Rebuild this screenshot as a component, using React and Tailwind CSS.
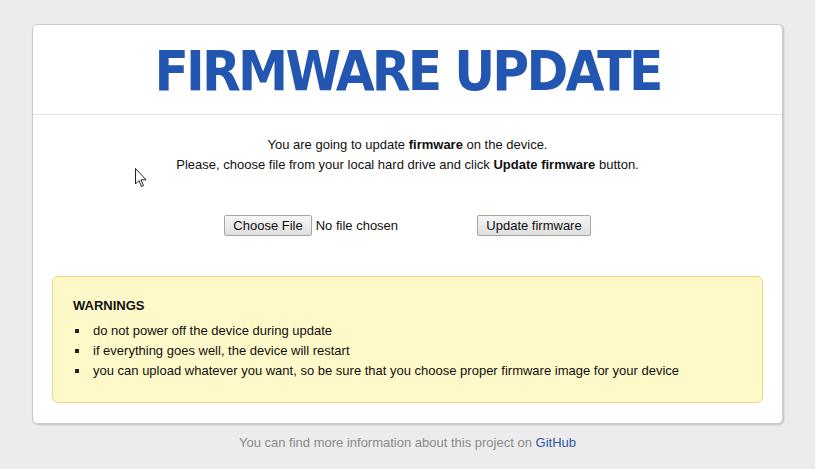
import React from "react";

function Btn({ children, className = "" }) {
  return (
    <span
      className={
        "inline-flex items-center h-[21px] px-[8px] border border-[#a6a6a6] rounded-[2px] bg-gradient-to-b from-[#f6f6f6] to-[#dedede] text-[13px] text-[#111] leading-none " +
        className
      }
    >
      {children}
    </span>
  );
}

export default function App() {
  return (
    <div className="min-h-[469px] w-full bg-[#ececec] relative font-['Liberation_Sans',Arial,sans-serif] text-[13px] text-[#111]">
      <div className="pt-[24px] px-[32px]">
        <div className="w-[751px] h-[400px] bg-white border border-[#c9c9c9] rounded-[5px] shadow-[1px_1px_2px_rgba(0,0,0,0.18)] flex flex-col">
          <div className="h-[90px] border-b border-[#e3e3e3] flex items-center justify-center">
            <h1 className="font-['DejaVu_Sans_Condensed','DejaVu_Sans',Verdana,sans-serif] font-bold text-[56px] leading-none text-[#2256b0] tracking-[-2.8px] mt-[2px]">
              FIRMWARE UPDATE
            </h1>
          </div>
          <div className="flex flex-col items-center pt-[20px] leading-[20px]">
            <p>
              You are going to update <b>firmware</b> on the device.
            </p>
            <p>
              Please, choose file from your local hard drive and click <b>Update firmware</b> button.
            </p>
          </div>
          <div className="flex justify-center items-center mt-[40px] gap-[16px]">
            <div className="w-[237px] flex items-center">
              <Btn>Choose File</Btn>
              <span className="ml-[4px]">No file chosen</span>
            </div>
            <Btn>Update firmware</Btn>
          </div>
          <div className="mx-[19px] mt-[40px] h-[127px] bg-[#fff8c9] border border-[#ebd68a] rounded-[6px] pt-[19px] px-[20px] leading-[20px]">
            <div className="font-bold">WARNINGS</div>
            <ul className="mt-[5px]">
              {[
                "do not power off the device during update",
                "if everything goes well, the device will restart",
                "you can upload whatever you want, so be sure that you choose proper firmware image for your device",
              ].map((t) => (
                <li key={t} className="flex items-center">
                  <span className="w-[4px] h-[4px] bg-[#222] ml-[2px] mr-[14px]"></span>
                  {t}
                </li>
              ))}
            </ul>
          </div>
        </div>
      </div>
      <div className="text-center mt-[9px] leading-[20px] text-[#8a8a8a]">
        You can find more information about this project on{" "}
        <span className="text-[#2e56a6]">GitHub</span>
      </div>
      <svg
        className="absolute left-[135px] top-[168px]"
        width="12"
        height="20"
        viewBox="0 0 12 20"
      >
        <path
          d="M0.5 0.5 L0.5 16 L4 12.5 L6.5 18.5 L8.5 17.7 L6 11.8 L11 11.8 Z"
          fill="#fff"
          stroke="#222"
          strokeWidth="1"
          strokeLinejoin="miter"
        />
      </svg>
    </div>
  );
}
